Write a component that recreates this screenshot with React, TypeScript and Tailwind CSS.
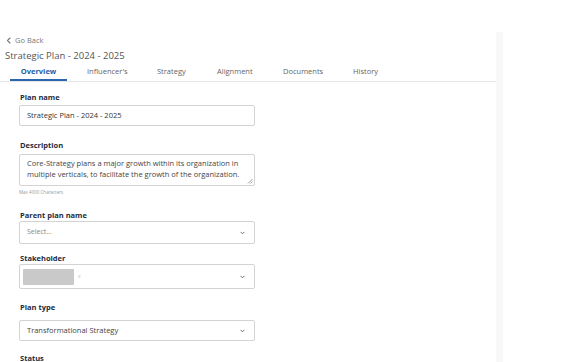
import React from 'react';

const Chevron = () => (
  <svg width="5" height="4" viewBox="0 0 6 4" fill="none" stroke="#666" strokeWidth="1.1" strokeLinecap="round" strokeLinejoin="round">
    <path d="M1 1l2 2 2-2" />
  </svg>
);

const tabs = ['Overview', "Influencer's", 'Strategy', 'Alignment', 'Documents', 'History'];
const tabW = ['w-[57px] mr-[20px]', 'w-[70px]', 'w-[60px]', 'w-[66px]', 'w-[70px]', 'w-[50px]'];

const Select = ({ children, className }: { children: React.ReactNode; className: string }) => (
  <div className={`w-[236px] border border-[#d3d3d3] rounded-[2px] flex items-center justify-between pr-[9px] ${className}`}>
    <div className="flex items-center">{children}</div>
    <Chevron />
  </div>
);

export default function App() {
  return (
    <div className="w-[562px] h-[362px] overflow-hidden bg-white flex text-[#333]" style={{ fontFamily: '"Open Sans", "Liberation Sans", sans-serif' }}>
      <div className="w-[496px] flex flex-col">
        {/* header */}
        <div className="pt-[35px] pl-[6px] flex items-center gap-[4px] text-[7.5px] leading-[10px] text-[#777]">
          <svg width="5" height="7" viewBox="0 0 5 7" fill="none" stroke="#777" strokeWidth="1.1" strokeLinecap="round" strokeLinejoin="round">
            <path d="M4 1L1.5 3.5 4 6" />
          </svg>
          <span>Go Back</span>
        </div>
        <div className="pl-[5px] mt-[5px] text-[9.5px] leading-[12px] text-[#555]">Strategic Plan - 2024 - 2025</div>

        {/* tabs */}
        <div className="mt-[3px] flex border-b border-[#e6e6e6] pl-[10px]">
          {tabs.map((t, i) => (
            <div
              key={t}
              className={`${tabW[i]} h-[16px] flex items-start text-[7.5px] leading-[12px] ${i === 0 ? 'justify-center font-bold text-[#1f5ca8] border-b-2 border-[#2c66b0]' : 'text-[#666]'}`}
            >
              {t}
            </div>
          ))}
        </div>

        {/* form */}
        <div className="pl-[19px] flex flex-col">
          <div className="mt-[10px] pl-[1px] text-[7.5px] leading-[10px] font-bold text-[#1e2b3c]">Plan name</div>
          <div className="mt-[3px] w-[236px] h-[21px] border border-[#d3d3d3] rounded-[2px] flex items-center pl-[7px] text-[7.5px]">
            Strategic Plan - 2024 - 2025
          </div>

          <div className="mt-[14px] pl-[1px] text-[7.5px] leading-[10px] font-bold text-[#1e2b3c]">Description</div>
          <div className="mt-[4px] w-[236px] h-[32px] border border-[#d3d3d3] rounded-[2px] pl-[7px] pt-[3px] text-[7.5px] leading-[11px] relative text-[#444]">
            Core-Strategy plans a major growth within its organization in multiple verticals, to facilitate the growth of the organization.
            <svg className="absolute right-[1px] bottom-[1px]" width="6" height="6" viewBox="0 0 6 6" stroke="#888" strokeWidth="0.8">
              <path d="M5.5 1L1 5.5M5.5 3.5L3.5 5.5" />
            </svg>
          </div>
          <div className="mt-[3px] text-[4.5px] leading-[6px] text-[#999]">Max 4000 Characters</div>

          <div className="mt-[15px] pl-[1px] text-[7.5px] leading-[10px] font-bold text-[#1e2b3c]">Parent plan name</div>
          <Select className="mt-[1px] h-[23px] pl-[7px]">
            <span className="text-[7px] text-[#888]">Select...</span>
          </Select>

          <div className="mt-[9px] pl-[1px] text-[7.5px] leading-[10px] font-bold text-[#1e2b3c]">Stakeholder</div>
          <Select className="mt-[1px] h-[25px] pl-[3px]">
            <span className="w-[51px] h-[16px] bg-[#c9c9c9] rounded-[1px]" />
            <span className="ml-[4px] text-[5px] text-[#bbb]">x</span>
          </Select>

          <div className="mt-[13px] pl-[1px] text-[7.5px] leading-[10px] font-bold text-[#1e2b3c]">Plan type</div>
          <Select className="mt-[8px] h-[21px] pl-[7px]">
            <span className="text-[7.5px] text-[#444]">Transformational Strategy</span>
          </Select>

          <div className="mt-[12px] pl-[1px] text-[7.5px] leading-[10px] font-bold text-[#1e2b3c]">Status</div>
        </div>
      </div>
      <div className="w-[7px] mt-[32px] bg-[#f8f8f8]" />
    </div>
  );
}
